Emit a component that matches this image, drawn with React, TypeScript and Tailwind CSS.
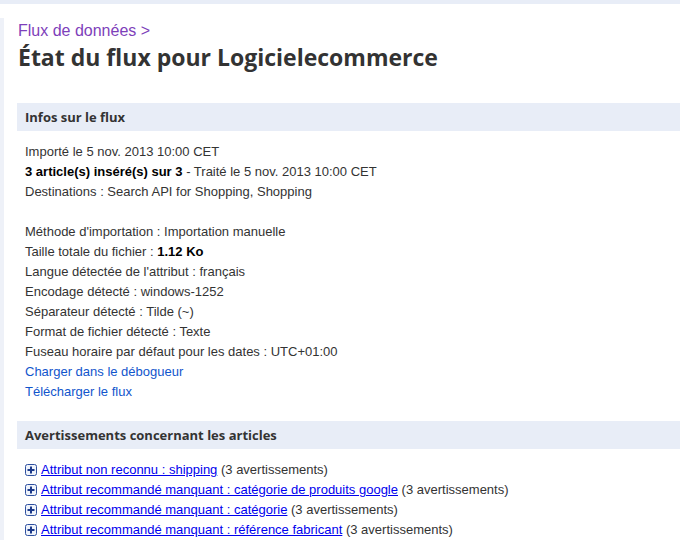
import React from 'react';

const infoLines: React.ReactNode[] = [
  'Méthode d\'importation : Importation manuelle',
  <>Taille totale du fichier : <b className="text-black">1.12 Ko</b></>,
  'Langue détectée de l\'attribut : français',
  'Encodage détecté : windows-1252',
  'Séparateur détecté : Tilde (~)',
  'Format de fichier détecté : Texte',
  'Fuseau horaire par défaut pour les dates : UTC+01:00',
];

const warnings = [
  'Attribut non reconnu : shipping',
  'Attribut recommandé manquant : catégorie de produits google',
  'Attribut recommandé manquant : catégorie',
  'Attribut recommandé manquant : référence fabricant',
];

function PlusBox() {
  return (
    <svg width="12" height="12" viewBox="0 0 12 12" className="shrink-0">
      <rect x="0.5" y="0.5" width="11" height="11" rx="2" fill="#eef3fb" stroke="#2d4f9e" />
      <path d="M6 2.5v7M2.5 6h7" stroke="#1c3a8a" strokeWidth="2" />
    </svg>
  );
}

function SectionHeader({ children }: { children: React.ReactNode }) {
  return (
    <div className="h-[28px] flex items-center pl-[8px] bg-[#e8edf7] text-[13px] font-bold text-[#333]"
      style={{ fontFamily: '"Open Sans", sans-serif' }}>
      {children}
    </div>
  );
}

export default function App() {
  return (
    <div className="min-h-[544px] bg-white text-[13px] leading-[20px] text-[#333]"
      style={{ fontFamily: '"Liberation Sans", Arial, sans-serif' }}>
      <div className="h-[4px] bg-[#e8edf7]" />
      <div className="flex">
        <div className="w-[4px] mt-[14px] bg-[#eef1f8]" />
        <main className="flex-1 pl-[13px]">
          {/* breadcrumb + title */}
          <div className="pt-[17px] pl-[1px]">
            <div className="text-[16px] leading-[20px] text-[#7e3fba]">Flux de données &gt;</div>
            <h1 className="text-[23px] leading-[32px] font-bold text-[#333]"
              style={{ fontFamily: '"Open Sans", sans-serif' }}>
              État du flux pour Logicielecommerce
            </h1>
          </div>

          <div className="mt-[30px]">
            <SectionHeader>Infos sur le flux</SectionHeader>
            <div className="pl-[8px] pt-[11px]">
              <div>Importé le 5 nov. 2013 10:00 CET</div>
              <div><b className="text-black">3 article(s) inséré(s) sur 3</b> - Traité le 5 nov. 2013 10:00 CET</div>
              <div>Destinations : Search API for Shopping, Shopping</div>
              <div className="h-[20px]" />
              {infoLines.map((l, i) => <div key={i}>{l}</div>)}
              <div className="text-[#1155cc]">Charger dans le débogueur</div>
              <div className="text-[#1155cc]">Télécharger le flux</div>
            </div>
          </div>

          <div className="mt-[19px]">
            <SectionHeader>Avertissements concernant les articles</SectionHeader>
            <div className="pl-[8px] pt-[11px]">
              {warnings.map(w => (
                <div key={w} className="flex items-center gap-[4px]">
                  <PlusBox />
                  <span><a className="text-[#0000ee] underline" href="#">{w}</a> (3 avertissements)</span>
                </div>
              ))}
            </div>
          </div>
        </main>
      </div>
    </div>
  );
}
